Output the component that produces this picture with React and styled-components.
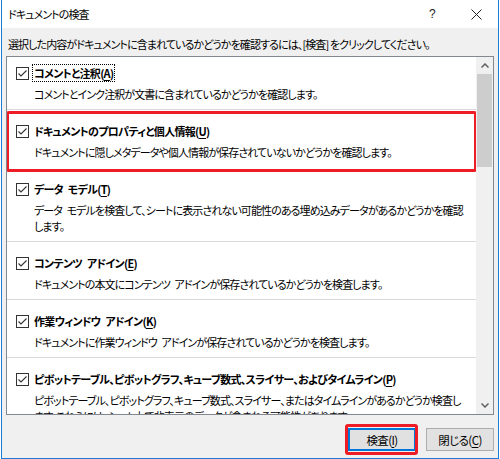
import React from 'react';
import styled, { createGlobalStyle } from 'styled-components';

const GlobalStyle = createGlobalStyle`
  html, body {
    margin: 0;
    padding: 0;
    background: #ffffff;
  }
  body {
    font-family: 'Noto Sans CJK JP', 'Noto Sans', sans-serif;
    font-size: 11px;
    letter-spacing: -0.9px;
    word-spacing: 3px;
    color: #000;
    font-feature-settings: 'palt';
  }
`;

const Window = styled.div`
  box-sizing: border-box;
  width: 498px;
  height: 459px;
  margin: 0 1px;
  border: 1px solid #1c7bd6;
  border-top: none;
  display: flex;
  flex-direction: column;
  background: #f0f0f0;
`;

const TitleBar = styled.div`
  height: 28px;
  flex: none;
  background: #fff;
  display: flex;
  align-items: center;
  padding-left: 6px;
  line-height: 16px;
`;

const TitleText = styled.div`
  flex: 1;
`;

const TitleButton = styled.div`
  width: 44px;
  height: 28px;
  display: flex;
  align-items: center;
  justify-content: center;
  color: #222;
  font-family: 'Liberation Sans', sans-serif;
  font-size: 12px;
  padding-left: ${p => p.$shift || 0}px;
`;

const Body = styled.div`
  flex: 1;
  display: flex;
  flex-direction: column;
  padding: 8px 4px 8px;
`;

const Instruction = styled.div`
  line-height: 16px;
  padding-left: 2px;
  margin-bottom: 4px;
  white-space: nowrap;
  word-spacing: 0;
`;

const ListBox = styled.div`
  box-sizing: border-box;
  height: 359px;
  border: 1px solid #828790;
  background: #fff;
  display: flex;
  overflow: hidden;
`;

const Items = styled.div`
  flex: 1;
  overflow: hidden;
`;

const Section = styled.div`
  position: relative;
  padding: 13px 0 7px;
  border-bottom: 1px solid ${p => (p.$highlight ? 'transparent' : '#dadada')};
  &:first-child {
    padding-top: 8px;
  }
  ${p =>
    p.$highlight &&
    `
    &::after {
      content: '';
      position: absolute;
      left: -1px;
      right: -1px;
      top: 1px;
      height: 55px;
      border: 3px solid #ee1c25;
      border-radius: 3px;
    }
  `}
`;

const TitleRow = styled.div`
  display: flex;
  align-items: center;
  padding-left: 9px;
  height: 16px;
`;

const Box = styled.div`
  box-sizing: border-box;
  width: 13px;
  height: 13px;
  border: 1px solid #333;
  margin-right: 4px;
  display: flex;
  align-items: center;
  justify-content: center;
`;

const Label = styled.span`
  font-weight: bold;
  letter-spacing: -0.7px;
  line-height: 16px;
  padding: 0 1px;
  white-space: nowrap;
  outline: ${p => (p.$focused ? '1px dotted #000' : 'none')};
  outline-offset: 0;
`;

const Desc = styled.div`
  margin-top: 5px;
  padding-left: 27px;
  line-height: 16px;
  white-space: nowrap;
`;

const ScrollBar = styled.div`
  width: 17px;
  flex: none;
  background: #f0f0f0;
  display: flex;
  flex-direction: column;
`;

const Arrow = styled.div`
  height: 17px;
  display: flex;
  align-items: center;
  justify-content: center;
`;

const Track = styled.div`
  flex: 1;
  padding: 0 1px;
`;

const Thumb = styled.div`
  height: 93px;
  background: #cdcdcd;
`;

const ButtonRow = styled.div`
  display: flex;
  justify-content: flex-end;
  gap: 10px;
  margin-top: 13px;
`;

const Button = styled.button`
  position: relative;
  box-sizing: border-box;
  width: 68px;
  height: 23px;
  padding: 0;
  font-family: inherit;
  font-size: 11.5px;
  letter-spacing: -0.6px;
  font-feature-settings: 'palt';
  color: #000;
  background: #e1e1e1;
  border: 1px solid ${p => (p.$primary ? '#0078d7' : '#adadad')};
  box-shadow: ${p => (p.$primary ? 'inset 0 0 0 1px #0078d7' : 'none')};
  ${p =>
    p.$primary &&
    `
    &::after {
      content: '';
      position: absolute;
      top: -5px;
      bottom: -5px;
      left: -4px;
      right: -3px;
      border: 3px solid #ee1c25;
      border-radius: 3px;
    }
  `}
`;

const U = styled.u`
  text-underline-offset: 2px;
`;

const Check = () => (
  <Box>
    <svg width="11" height="11" viewBox="0 0 11 11">
      <polyline points="1.5,5.5 4,8 9.5,2.5" fill="none" stroke="#333" strokeWidth="1.1" />
    </svg>
  </Box>
);

const Chevron = ({ up }) => (
  <svg width="8" height="5" viewBox="0 0 8 5">
    <polyline
      points={up ? '0.5,4.5 4,1 7.5,4.5' : '0.5,0.5 4,4 7.5,0.5'}
      fill="none"
      stroke="#606060"
      strokeWidth="1.5"
    />
  </svg>
);

const sections = [
  {
    title: 'コメントと注釈',
    key: 'A',
    focused: true,
    desc: ['コメントとインク注釈が文書に含まれているかどうかを確認します。'],
  },
  {
    title: 'ドキュメントのプロパティと個人情報',
    key: 'U',
    highlight: true,
    desc: ['ドキュメントに隠しメタデータや個人情報が保存されていないかどうかを確認します。'],
  },
  {
    title: 'データ モデル',
    key: 'T',
    desc: [
      'データ モデルを検査して、シートに表示されない可能性のある埋め込みデータがあるかどうかを確認',
      'します。',
    ],
  },
  {
    title: 'コンテンツ アドイン',
    key: 'E',
    desc: ['ドキュメントの本文にコンテンツ アドインが保存されているかどうかを検査します。'],
  },
  {
    title: '作業ウィンドウ アドイン',
    key: 'K',
    desc: ['ドキュメントに作業ウィンドウ アドインが保存されているかどうかを検査します。'],
  },
  {
    title: 'ピボットテーブル、ピボットグラフ、キューブ数式、スライサー、およびタイムライン',
    key: 'P',
    desc: [
      'ピボットテーブル、ピボットグラフ、キューブ数式、スライサー、またはタイムラインがあるかどうか検査し',
      'ます。これらには、シート上で非表示のデータが含まれる可能性があります。',
    ],
  },
];

export default function App() {
  return (
    <>
      <GlobalStyle />
      <Window>
        <TitleBar>
          <TitleText>ドキュメントの検査</TitleText>
          <TitleButton $shift={6}>?</TitleButton>
          <TitleButton>
            <svg width="11" height="11" viewBox="0 0 11 11">
              <path d="M0.5 0.5 L10.5 10.5 M10.5 0.5 L0.5 10.5" stroke="#222" strokeWidth="1" />
            </svg>
          </TitleButton>
        </TitleBar>
        <Body>
          <Instruction>
            選択した内容がドキュメントに含まれているかどうかを確認するには、[検査] をクリックしてください。
          </Instruction>
          <ListBox>
            <Items>
              {sections.map(s => (
                <Section key={s.key} $highlight={s.highlight}>
                  <TitleRow>
                    <Check />
                    <Label $focused={s.focused}>
                      {s.title}(<U>{s.key}</U>)
                    </Label>
                  </TitleRow>
                  <Desc>
                    {s.desc.map((line, i) => (
                      <div key={i}>{line}</div>
                    ))}
                  </Desc>
                </Section>
              ))}
            </Items>
            <ScrollBar>
              <Arrow>
                <Chevron up />
              </Arrow>
              <Track>
                <Thumb />
              </Track>
              <Arrow>
                <Chevron />
              </Arrow>
            </ScrollBar>
          </ListBox>
          <ButtonRow>
            <Button $primary>
              検査(<U>I</U>)
            </Button>
            <Button>
              閉じる(<U>C</U>)
            </Button>
          </ButtonRow>
        </Body>
      </Window>
    </>
  );
}
